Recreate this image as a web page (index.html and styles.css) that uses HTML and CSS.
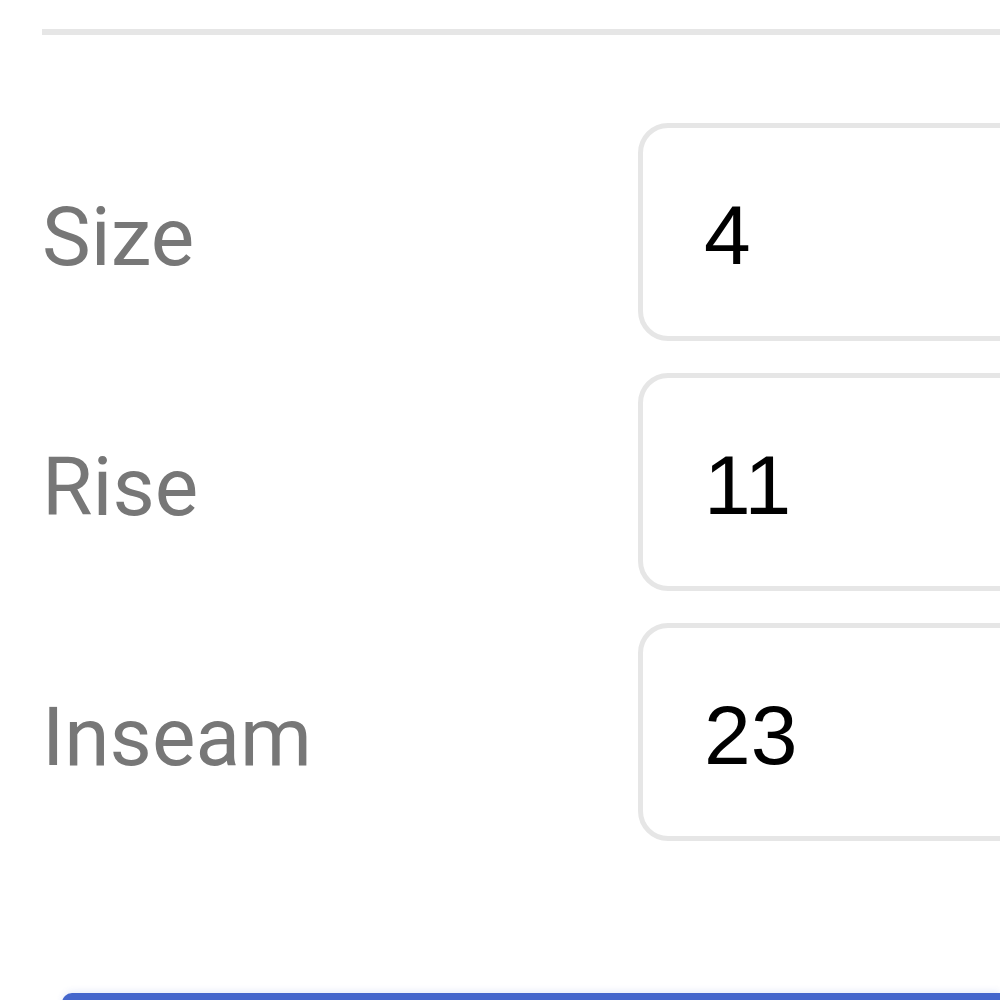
FILE: index.html
```html
<!DOCTYPE html>
<html>
<head>
<meta charset="utf-8">
<link rel="stylesheet" href="styles.css">
</head>
<body>
<div class="page">
  <div class="divider"></div>
  <form class="fields">
    <div class="row">
      <label class="label" for="size">Size</label>
      <input class="field" id="size" type="text" value="4" readonly>
    </div>
    <div class="row">
      <label class="label" for="rise">Rise</label>
      <input class="field" id="rise" type="text" value="11" readonly>
    </div>
    <div class="row">
      <label class="label" for="inseam">Inseam</label>
      <input class="field" id="inseam" type="text" value="23" readonly>
    </div>
  </form>
  <div class="actions">
    <button class="primary" type="button"></button>
  </div>
</div>
</body>
</html>
```
FILE: styles.css
```css
html, body {
  margin: 0;
  padding: 0;
  background: #ffffff;
  overflow: hidden;
  width: 1000px;
  height: 1000px;
}

.page {
  padding-left: 42px;
  padding-top: 29px;
  height: 1000px;
  box-sizing: border-box;
  overflow: hidden;
}

.divider {
  height: 6px;
  background: #e6e6e6;
}

.fields {
  margin: 88px 0 0 0;
  display: flex;
  flex-direction: column;
  gap: 32px;
}

.row {
  display: grid;
  grid-template-columns: 596px 1fr;
  align-items: center;
  height: 218px;
}

.label {
  font-family: Roboto, "Noto Sans", sans-serif;
  font-size: 82px;
  color: #777777;
  line-height: 1;
  padding-top: 9px;
}

.field {
  box-sizing: border-box;
  height: 218px;
  width: calc(100% + 40px);
  border: 5px solid #e6e6e6;
  border-radius: 30px;
  padding: 6px 0 0 61px;
  margin: 0;
  font-family: "Liberation Sans", Arial, sans-serif;
  font-size: 84px;
  color: #000000;
  background: #ffffff;
  outline: none;
}

.actions {
  margin-top: 152px;
  padding-left: 20px;
}

.primary {
  display: block;
  width: 100%;
  height: 80px;
  border: none;
  border-radius: 10px 0 0 10px;
  background: #4466cc;
  box-shadow: 0 -2px 6px rgba(68, 102, 204, 0.12);
  padding: 0;
}
```
